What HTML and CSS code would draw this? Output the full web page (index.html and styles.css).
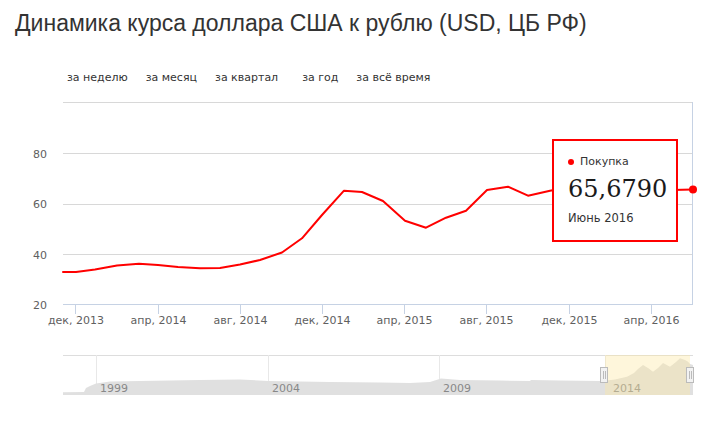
FILE: index.html
```html
<!DOCTYPE html>
<html lang="ru">
<head>
<meta charset="utf-8">
<title>Динамика курса доллара США к рублю</title>
<link rel="stylesheet" href="styles.css">
</head>
<body>
<h1 class="title">Динамика курса доллара США к рублю (USD, ЦБ РФ)</h1>
<div class="ranges">
  <span class="range r-week">за неделю</span>
  <span class="range r-month">за месяц</span>
  <span class="range r-quarter">за квартал</span>
  <span class="range r-year">за год</span>
  <span class="range r-all">за всё время</span>
</div>
<div class="chart">
  <svg class="plot" width="719" height="310" viewBox="0 95 719 310" xmlns="http://www.w3.org/2000/svg">
    <g class="grid">
      <line x1="63" y1="102.5" x2="693" y2="102.5"/>
      <line x1="63" y1="153.5" x2="693" y2="153.5"/>
      <line x1="63" y1="204.5" x2="693" y2="204.5"/>
      <line x1="63" y1="254.5" x2="693" y2="254.5"/>
    </g>
    <g class="axis">
      <line x1="692.5" y1="102" x2="692.5" y2="305"/>
      <line x1="63" y1="304.5" x2="693" y2="304.5"/>
      <line x1="75.5" y1="305" x2="75.5" y2="314"/>
      <line x1="158.5" y1="305" x2="158.5" y2="314"/>
      <line x1="240.5" y1="305" x2="240.5" y2="314"/>
      <line x1="322.5" y1="305" x2="322.5" y2="314"/>
      <line x1="404.5" y1="305" x2="404.5" y2="314"/>
      <line x1="486.5" y1="305" x2="486.5" y2="314"/>
      <line x1="569.5" y1="305" x2="569.5" y2="314"/>
      <line x1="651.5" y1="305" x2="651.5" y2="314"/>
    </g>
    <g class="ylabels">
      <text x="47" y="158">80</text>
      <text x="47" y="208">60</text>
      <text x="47" y="259">40</text>
      <text x="47" y="309">20</text>
    </g>
    <g class="xlabels">
      <text x="76" y="324">дек, 2013</text>
      <text x="158.5" y="324">апр, 2014</text>
      <text x="240.5" y="324">авг, 2014</text>
      <text x="322.5" y="324">дек, 2014</text>
      <text x="404.5" y="324">апр, 2015</text>
      <text x="486.5" y="324">авг, 2015</text>
      <text x="569.5" y="324">дек, 2015</text>
      <text x="651.5" y="324">апр, 2016</text>
    </g>
    <polyline class="series" points="63,272 76,272 95,269.5 117,265.5 139,263.7 158,265 178,267 200,268.3 220,268 240,264.5 260,260 282,252.5 302,238.3 322,215 344,190.7 362,192 383,201 405,220.7 426,227.7 446,217.7 466,210.7 487,190 508,186.7 528,195.7 550,190.7 570,187 590,183 611,185 631,180 652,188 672,190 693,189.5"/>
    <circle class="marker" cx="693" cy="189.5" r="4"/>

    <g class="navigator">
      <line class="nav-top" x1="63" y1="355.5" x2="693" y2="355.5"/>
      <g class="nav-grid">
        <line x1="96.5" y1="355" x2="96.5" y2="395"/>
        <line x1="268.5" y1="355" x2="268.5" y2="395"/>
        <line x1="439.5" y1="355" x2="439.5" y2="395"/>
        <line x1="605.5" y1="355" x2="605.5" y2="395"/>
      </g>
      <path class="nav-area" d="M63,392.3 L84,392 L86,388 L90,386 L96,383.5 L110,381.5 L140,381 L200,380 L240,379.5 L268,381 L300,381.5 L330,382 L380,382.5 L410,383 L430,382 L441,378.5 L460,380 L500,380.5 L530,381 L531,380 L560,380.5 L600,381 L605,380.7 L615,379.5 L627,376.7 L634,373 L638,369 L643,365 L648,368 L653,371.7 L658,368 L663,363 L670,366.7 L676,362 L680,358.3 L685,360 L688,361.7 L690,364 L693,365 L693,395 L63,395 Z"/>
      <g class="nav-labels">
        <text x="100" y="391.5">1999</text>
        <text x="272" y="391.5">2004</text>
        <text x="443" y="391.5">2009</text>
        <text x="613" y="391.5">2014</text>
      </g>
      <rect class="nav-selection" x="605" y="355" width="85" height="40"/>
      <g class="handle">
        <rect x="600.5" y="367.5" width="7" height="15"/>
        <line x1="603.5" y1="371" x2="603.5" y2="379"/>
        <line x1="605.5" y1="371" x2="605.5" y2="379"/>
      </g>
      <g class="handle">
        <rect x="686.5" y="367.5" width="7" height="15"/>
        <line x1="689.5" y1="371" x2="689.5" y2="379"/>
        <line x1="691.5" y1="371" x2="691.5" y2="379"/>
      </g>
    </g>
  </svg>
  <div class="tooltip">
    <div class="tt-series"><span class="tt-dot"></span>Покупка</div>
    <div class="tt-value">65,6790</div>
    <div class="tt-date">Июнь 2016</div>
  </div>
</div>
</body>
</html>
```

FILE: styles.css
```css
html, body {
  margin: 0;
  padding: 0;
  background: #ffffff;
}

body {
  width: 719px;
  height: 427px;
  overflow: hidden;
  font-family: "DejaVu Sans", "Open Sans", sans-serif;
  color: #333333;
}

.title {
  margin: 0;
  padding: 9px 0 0 15px;
  font-family: "Liberation Sans", Arial, sans-serif;
  font-weight: normal;
  font-size: 23px;
  line-height: 28px;
  color: #333333;
}

.ranges {
  display: flex;
  margin-top: 33px;
  padding-left: 67px;
  font-size: 11px;
  line-height: 16px;
  color: #333333;
}

.range {
  margin-right: 18px;
  white-space: nowrap;
}

.r-quarter {
  margin-right: 24px;
}

.chart {
  position: relative;
  margin-top: 9px;
  width: 719px;
  height: 310px;
}

.plot {
  display: block;
}

.grid line {
  stroke: #d8d8d8;
  stroke-width: 1;
}

.axis line {
  stroke: #c6d2e4;
  stroke-width: 1;
}

.ylabels text {
  font-family: "DejaVu Sans", sans-serif;
  font-size: 11px;
  fill: #606060;
  text-anchor: end;
}

.xlabels text {
  font-family: "DejaVu Sans", sans-serif;
  font-size: 11px;
  fill: #606060;
  text-anchor: middle;
}

.series {
  fill: none;
  stroke: #ff0000;
  stroke-width: 2;
  stroke-linejoin: round;
  stroke-linecap: round;
}

.marker {
  fill: #ff0000;
}

.nav-top {
  stroke: #dddddd;
  stroke-width: 1;
}

.nav-grid line {
  stroke: #e8e8e8;
  stroke-width: 1;
}

.nav-area {
  fill: #e0e0e0;
  stroke: none;
}

.nav-labels text {
  font-family: "DejaVu Sans", sans-serif;
  font-size: 11px;
  fill: #888888;
}

.nav-selection {
  fill: rgba(252, 232, 160, 0.38);
}

.handle rect {
  fill: #f2f2f2;
  stroke: #bbbbbb;
  stroke-width: 1;
}

.handle line {
  stroke: #bbbbbb;
  stroke-width: 1;
}

.tooltip {
  position: absolute;
  left: 552px;
  top: 44px;
  width: 108px;
  height: 99px;
  border: 2px solid #ff0000;
  background: #ffffff;
  padding: 0 0 0 14px;
}

.tt-series {
  display: flex;
  align-items: center;
  margin-top: 13px;
  font-size: 11px;
  line-height: 16px;
  color: #333333;
}

.tt-dot {
  width: 6px;
  height: 6px;
  border-radius: 50%;
  background: #ff0000;
  margin-right: 6px;
}

.tt-value {
  margin-top: 4px;
  font-family: "DejaVu Serif", "Liberation Serif", serif;
  font-size: 24px;
  line-height: 30px;
  color: #1a1a1a;
}

.tt-date {
  margin-top: 6px;
  font-size: 11.5px;
  line-height: 16px;
  color: #333333;
}
```
